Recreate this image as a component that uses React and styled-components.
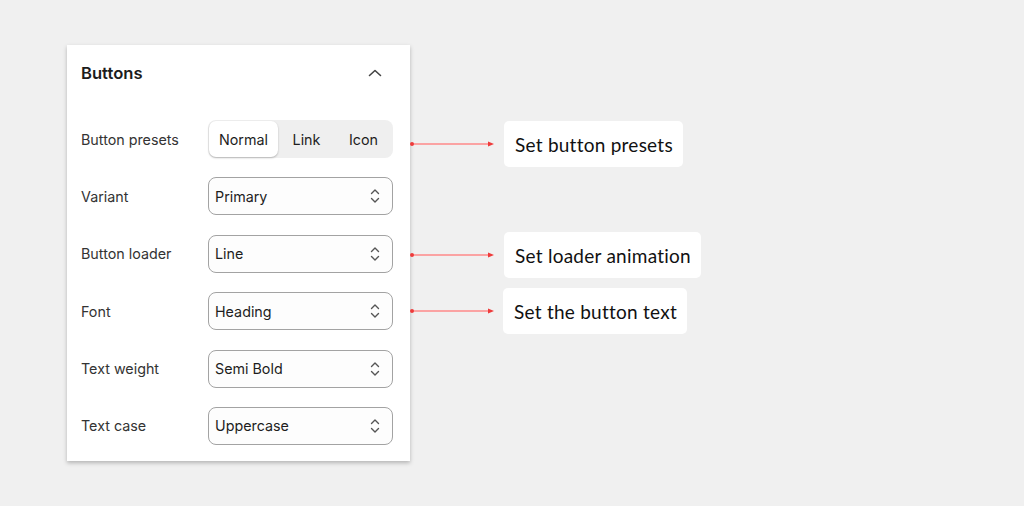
import React from 'react'
import styled, { createGlobalStyle } from 'styled-components'

const Global = createGlobalStyle`
    html, body {
        margin: 0;
        background: #f0f0f0;
    }
    body {
        font-family: Inter, "Noto Sans", sans-serif;
    }
`
const Page = styled.div`
    position: relative;
    width: 1024px;
    height: 506px;
    padding: 45px 0 0 67px;
    box-sizing: border-box;
`
const Panel = styled.div`
    width: 343px;
    background: #fff;
    box-shadow: 0 2px 4px rgba(0, 0, 0, 0.25);
    padding: 0 17px 16px 14px;
    box-sizing: border-box;
`
const Header = styled.div`
    height: 55px;
    display: flex;
    align-items: center;
    justify-content: space-between;
    padding-right: 11px;
`
const Title = styled.h2`
    margin: 0;
    font-size: 16.6px;
    font-weight: 600;
    color: #1c1c1c;
`
const Rows = styled.div`
    display: flex;
    flex-direction: column;
    gap: 19.4px;
    padding-top: 20px;
`
const Row = styled.div`
    display: flex;
    align-items: center;
    justify-content: space-between;
    height: 38px;
`
const Label = styled.span`
    font-size: 14.3px;
    color: #333;
`
const Segmented = styled.div`
    width: 185px;
    height: 38px;
    box-sizing: border-box;
    padding: 1px;
    display: flex;
    background: #efefef;
    border-radius: 8px;
`
const Segment = styled.button`
    flex: ${p => (p.active ? '0 0 69px' : '1')};
    border: none;
    border-radius: 7px;
    font-family: inherit;
    font-size: 14.3px;
    color: #1e1e1e;
    background: ${p => (p.active ? '#fff' : 'transparent')};
    box-shadow: ${p => (p.active ? '0 1px 2px rgba(0,0,0,0.25)' : 'none')};
    padding: 0;
`
const Select = styled.div`
    width: 185px;
    height: 38px;
    box-sizing: border-box;
    border: 1px solid #a3a3a3;
    border-radius: 8px;
    background: #fdfdfd;
    display: flex;
    align-items: center;
    justify-content: space-between;
    padding: 0 12px 0 6px;
    font-size: 14.3px;
    color: #1e1e1e;
`
const Note = styled.div`
    position: absolute;
    left: 410px;
    top: ${p => p.top}px;
    display: flex;
    align-items: center;
`
const NoteBox = styled.div`
    background: #fff;
    border-radius: 5px;
    height: 46px;
    padding: 0 10px 0 11px;
    display: flex;
    align-items: center;
    font-family: Lato, "Noto Sans", sans-serif;
    font-size: 19px;
    font-weight: 400;
    letter-spacing: 0.25px;
    color: #111;
    margin-left: ${p => p.shift}px;
`

const ChevronUp = () => (
    <svg width="14" height="10" viewBox="0 0 14 10" fill="none">
        <path d="M1.5 7.5L7 2.5l5.5 5" stroke="#444" strokeWidth="1.6" strokeLinecap="round" strokeLinejoin="round" />
    </svg>
)

const UpDown = () => (
    <svg width="10" height="16" viewBox="0 0 10 16" fill="none">
        <path d="M1.5 5.5L5 2l3.5 3.5M1.5 10.5L5 14l3.5-3.5" stroke="#555" strokeWidth="1.4" strokeLinecap="round" strokeLinejoin="round" />
    </svg>
)

const Arrow = () => (
    <svg width="84" height="8" viewBox="0 0 84 8">
        <line x1="2" y1="4" x2="80" y2="4" stroke="#ff8a8a" strokeWidth="1.5" />
        <circle cx="2" cy="4" r="2" fill="#ee3b3b" />
        <path d="M78 1.5L84 4l-6 2.5z" fill="#ee3b3b" />
    </svg>
)

const fields = [
    ['Variant', 'Primary'],
    ['Button loader', 'Line'],
    ['Font', 'Heading'],
    ['Text weight', 'Semi Bold'],
    ['Text case', 'Uppercase'],
]

const notes = [
    { top: 121, text: 'Set button presets', shift: 10 },
    { top: 232, text: 'Set loader animation', shift: 10 },
    { top: 288, text: 'Set the button text', shift: 9 },
]

export default function App() {
    return (
        <Page>
            <Global />
            <Panel>
                <Header>
                    <Title>Buttons</Title>
                    <ChevronUp />
                </Header>
                <Rows>
                    <Row>
                        <Label>Button presets</Label>
                        <Segmented>
                            <Segment active>Normal</Segment>
                            <Segment>Link</Segment>
                            <Segment>Icon</Segment>
                        </Segmented>
                    </Row>
                    {fields.map(([label, value]) => (
                        <Row key={label}>
                            <Label>{label}</Label>
                            <Select>
                                {value}
                                <UpDown />
                            </Select>
                        </Row>
                    ))}
                </Rows>
            </Panel>
            {notes.map(n => (
                <Note key={n.text} top={n.top}>
                    <Arrow />
                    <NoteBox shift={n.shift}>{n.text}</NoteBox>
                </Note>
            ))}
        </Page>
    )
}
